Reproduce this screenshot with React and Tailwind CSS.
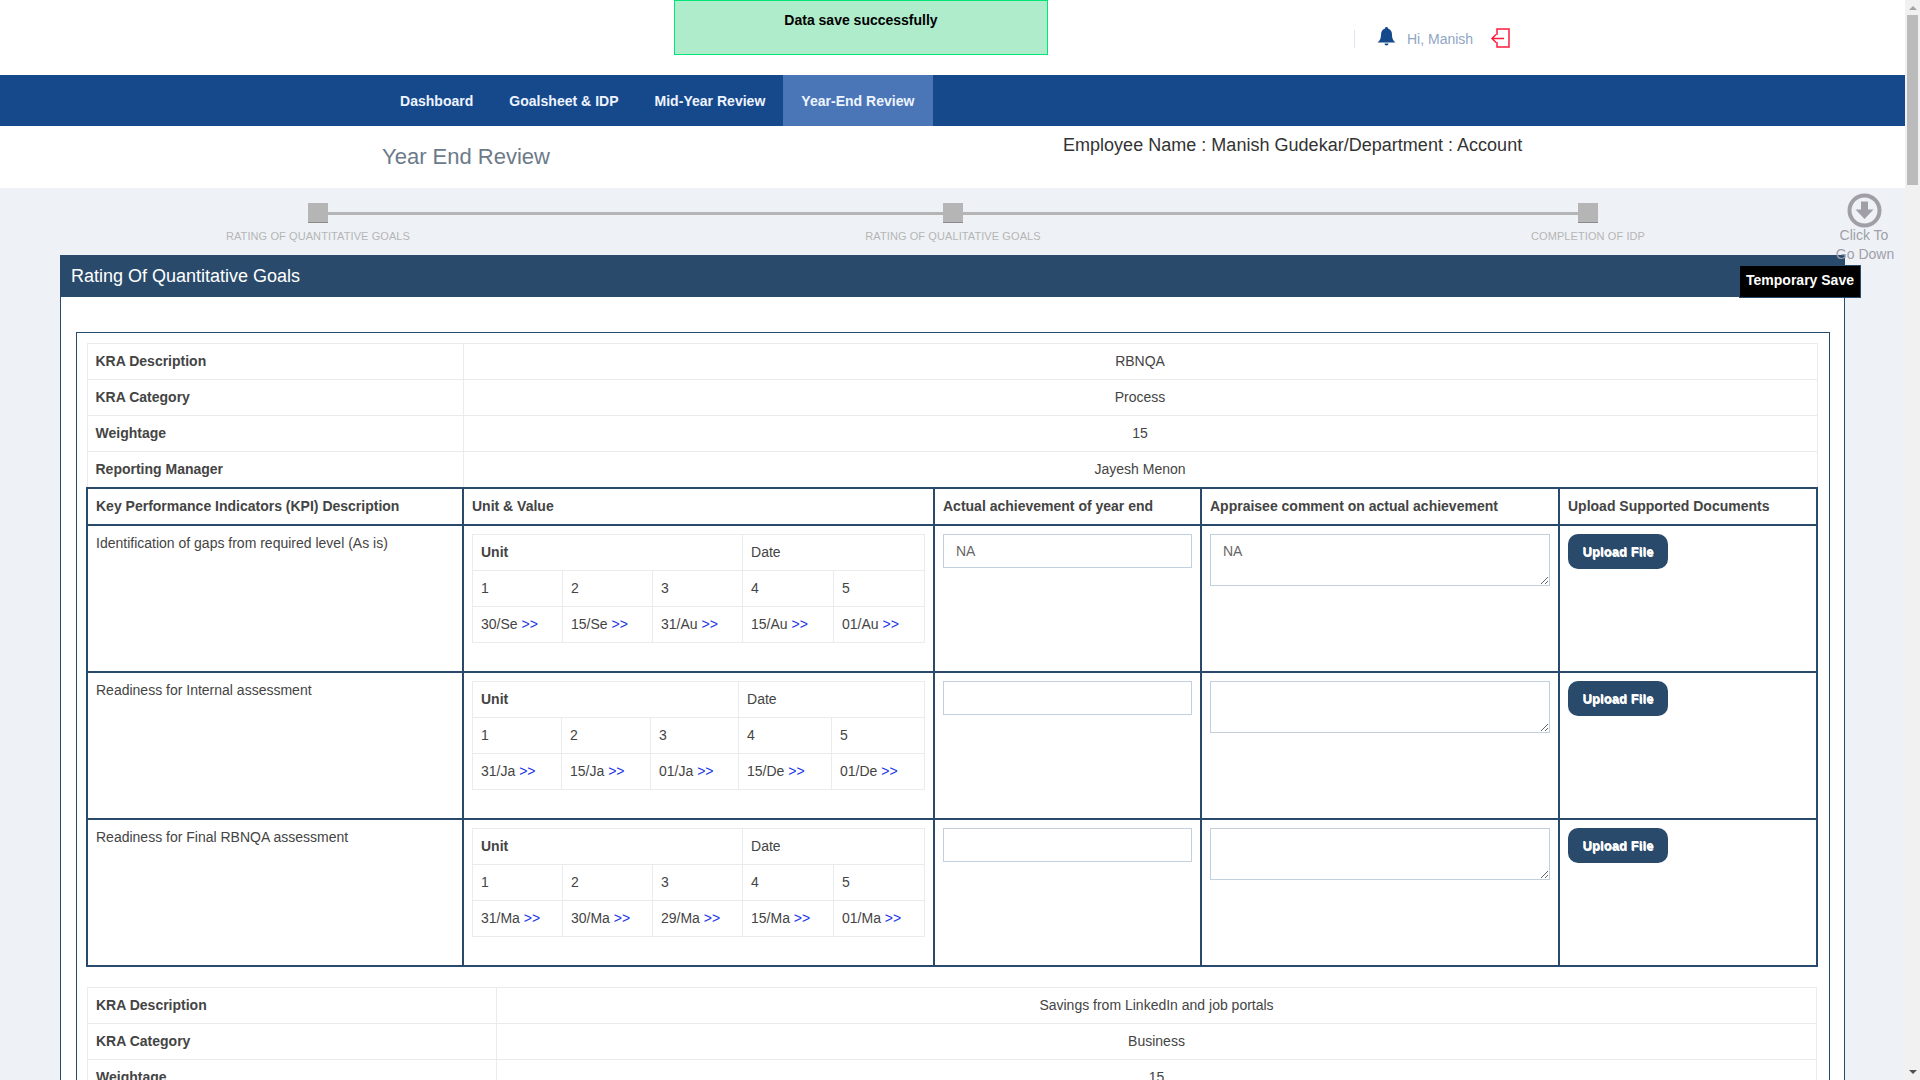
import React from "react";

const font = "font-['Liberation_Sans',Arial,sans-serif]";
const lightCell = "border border-[#e9ecef] h-9 px-2 pt-[7px] pb-0 align-top";
const darkCell = "border-2 border-[#2a4a6b] px-2 align-top";

function SubTable({ widths, dates }) {
  return (
    <table className="w-[452px] table-fixed border-collapse text-sm text-[#444]">
      <colgroup>
        {widths.map((w, i) => (
          <col key={i} className={w} />
        ))}
      </colgroup>
      <tbody>
        <tr>
          <td colSpan={3} className={lightCell + " font-bold"}>Unit</td>
          <td colSpan={2} className={lightCell}>Date</td>
        </tr>
        <tr>
          {[1, 2, 3, 4, 5].map((n) => (
            <td key={n} className={lightCell}>{n}</td>
          ))}
        </tr>
        <tr>
          {dates.map((d) => (
            <td key={d} className={lightCell}>
              {d} <span className="text-[#2036e8]">&gt;&gt;</span>
            </td>
          ))}
        </tr>
      </tbody>
    </table>
  );
}

function KpiRow({ title, sub, value }) {
  return (
    <tr className="h-[147px]">
      <td className={darkCell + " pt-[7px]"}>{title}</td>
      <td className={darkCell + " pt-2"}>{sub}</td>
      <td className={darkCell + " pt-2"}>
        <input
          readOnly
          value={value}
          className="block w-[249px] h-[34px] border border-[#c2cfdc] px-3 text-sm text-[#666] outline-none"
        />
      </td>
      <td className={darkCell + " pt-2"}>
        <textarea
          readOnly
          value={value}
          className="block w-[340px] h-[52px] border border-[#c2cfdc] px-3 py-[6px] text-sm text-[#666] outline-none"
        />
      </td>
      <td className={darkCell + " pt-2"}>
        <button className="block w-[100px] h-[35px] rounded-[10px] bg-[#2a4a6b] pt-[2px] text-[13px] font-bold tracking-[0.1px] text-white [text-shadow:0.5px_0.5px_0_#fff]">
          Upload File
        </button>
      </td>
    </tr>
  );
}

function InfoRows({ rows }) {
  return rows.map(([k, v]) => (
    <tr key={k}>
      <th className={lightCell + " text-left font-bold"}>{k}</th>
      <td colSpan={4} className={lightCell + " text-center"}>{v}</td>
    </tr>
  ));
}

const wideCols = ["w-[90px]", "w-[90px]", "w-[90px]", "w-[91px]", "w-[91px]"];
const narrowCols = ["w-[89px]", "w-[89px]", "w-[88px]", "w-[93px]", "w-[93px]"];

export default function App() {
  return (
    <div className={"flex h-screen w-full overflow-hidden " + font}>
      <div className="relative w-[1905px] h-full overflow-hidden bg-[#eef2f6]">
        <header className="flex h-[75px] items-start bg-white">
          <div className="ml-[674px] h-[55px] w-[374px] border border-[#00e676] bg-[#aeeccb] pt-[9px] text-center text-sm font-bold text-black">
            Data save successfully
          </div>
          <div className="ml-[306px] mt-[27px] flex h-[21px] items-center">
            <div className="mt-[3px] h-[18px] w-px bg-[#dde4ec]" />
            <svg className="ml-[22px] -mt-[2px]" width="19" height="19" viewBox="0 0 19 19" fill="#16498c">
              <path d="M9.5 0c1 0 1.5.7 1.5 1.6C14 2.4 15 5 15 8c0 3.5 1 5.5 3.5 7.5H.5C3 13.5 4 11.5 4 8c0-3 1-5.6 4-6.4C8 .7 8.5 0 9.5 0z" />
              <path d="M7.5 16.5h4a2 2 0 0 1-4 0z" />
            </svg>
            <span className="ml-[11px] mt-[3px] text-sm text-[#8fa6c4]">Hi, Manish</span>
            <svg className="ml-[17px] mt-[1px]" width="20" height="20" viewBox="0 0 20 20" fill="none" stroke="#ff1a3c" strokeWidth="1.5">
              <path d="M7 7V1h12v18H7v-5" />
              <path d="M14 10.5H2M6 6.5l-4 4 4 4" />
            </svg>
          </div>
        </header>

        <nav className="flex h-[51px] bg-[#16498c] pl-[382px] text-sm font-bold text-[#eef4ff]">
          <a className="flex items-center px-[18px] tracking-[0.02px]">Dashboard</a>
          <a className="flex items-center px-[18px] tracking-[0.02px]">Goalsheet &amp; IDP</a>
          <a className="flex items-center px-[18px] tracking-[0.02px]">Mid-Year Review</a>
          <a className="flex items-center bg-[#4a76b8] pl-[18px] pr-[19px] tracking-[0.02px]">Year-End Review</a>
        </nav>

        <div className="flex h-[62px] bg-white">
          <h1 className="ml-[382px] mt-[18px] text-[22px] leading-[26px] text-[#6c7a89]">Year End Review</h1>
          <div className="ml-[513px] mt-[8px] text-[18px] leading-[22px] tracking-[0.02px] text-[#333]">
            Employee Name : Manish Gudekar/Department : Account
          </div>
        </div>

        <div className="pt-[15px]">
          <div className="ml-[308px] flex w-[1290px] items-center">
            <div className="h-5 w-5 border-b border-[#8a8a8a] bg-[#b5b5b5]" />
            <div className="h-[3px] grow bg-[#b5b5b5]" />
            <div className="h-5 w-5 border-b border-[#8a8a8a] bg-[#b5b5b5]" />
            <div className="h-[3px] grow bg-[#b5b5b5]" />
            <div className="h-5 w-5 border-b border-[#8a8a8a] bg-[#b5b5b5]" />
          </div>
          <div className="ml-[168px] mt-[6px] flex h-[14px] w-[1570px] justify-between text-[11px] leading-[14px] tracking-[0.09px] text-[#b5b5b5]">
            <span className="w-[300px] text-center">RATING OF QUANTITATIVE GOALS</span>
            <span className="w-[300px] text-center">RATING OF QUALITATIVE GOALS</span>
            <span className="w-[300px] text-center">COMPLETION OF IDP</span>
          </div>
        </div>

        <section className="mx-[60px] mt-3 border-x border-[#2a4a6b] bg-white">
          <div className="flex h-[42px] items-center bg-[#2a4a6b] pl-[10px] text-[18px] text-white">
            Rating Of Quantitative Goals
          </div>
          <div className="ml-[15px] mr-[14px] mt-[35px] border border-[#2a4a6b] py-[10px] pl-[9px] pr-[10px] text-sm text-[#444]">
            <table className="w-[1730px] table-fixed border-collapse">
              <colgroup>
                <col className="w-[376px]" />
                <col className="w-[471px]" />
                <col className="w-[267px]" />
                <col className="w-[358px]" />
                <col className="w-[258px]" />
              </colgroup>
              <tbody>
                <InfoRows
                  rows={[
                    ["KRA Description", "RBNQA"],
                    ["KRA Category", "Process"],
                    ["Weightage", "15"],
                    ["Reporting Manager", "Jayesh Menon"],
                  ]}
                />
                <tr className="h-[37px] font-bold">
                  <td className={darkCell + " !align-middle"}>Key Performance Indicators (KPI) Description</td>
                  <td className={darkCell + " !align-middle"}>Unit &amp; Value</td>
                  <td className={darkCell + " !align-middle"}>Actual achievement of year end</td>
                  <td className={darkCell + " !align-middle"}>Appraisee comment on actual achievement</td>
                  <td className={darkCell + " !align-middle"}>Upload Supported Documents</td>
                </tr>
                <KpiRow
                  title="Identification of gaps from required level (As is)"
                  value="NA"
                  sub={<SubTable widths={wideCols} dates={["30/Se", "15/Se", "31/Au", "15/Au", "01/Au"]} />}
                />
                <KpiRow
                  title="Readiness for Internal assessment"
                  value=""
                  sub={<SubTable widths={narrowCols} dates={["31/Ja", "15/Ja", "01/Ja", "15/De", "01/De"]} />}
                />
                <KpiRow
                  title="Readiness for Final RBNQA assessment"
                  value=""
                  sub={<SubTable widths={wideCols} dates={["31/Ma", "30/Ma", "29/Ma", "15/Ma", "01/Ma"]} />}
                />
              </tbody>
            </table>

            <table className="ml-[1px] mt-[20px] w-[1730px] table-fixed border-collapse">
              <colgroup>
                <col className="w-[409px]" />
                <col />
                <col />
                <col />
                <col />
              </colgroup>
              <tbody>
                <InfoRows
                  rows={[
                    ["KRA Description", "Savings from LinkedIn and job portals"],
                    ["KRA Category", "Business"],
                    ["Weightage", "15"],
                  ]}
                />
              </tbody>
            </table>
          </div>
        </section>

        <div className="absolute left-[1831px] top-[193px] flex w-[66px] flex-col items-center text-sm leading-[19px] text-[#a09fa8]">
          <svg width="35" height="35" viewBox="0 0 35 35">
            <circle cx="17.5" cy="17.5" r="15" fill="none" stroke="#a09fa8" strokeWidth="4" />
            <path d="M14 8.5h7v8h5.5l-9 9.5-9-9.5H14z" fill="#a09fa8" />
          </svg>
          <span className="-mt-[2px]">Click To</span>
          <span className="ml-[2px]">Go Down</span>
        </div>

        <button className="absolute left-[1739px] top-[265px] h-[33px] w-[122px] border border-[#2a4a6b] bg-black pb-[3px] text-sm font-bold text-white">
          Temporary Save
        </button>
      </div>

      <div className="flex h-full w-[15px] flex-col items-center bg-[#f1f1f1]">
        <div className="mt-[6px] h-0 w-0 border-x-[4px] border-b-[4px] border-x-transparent border-b-[#a3a3a3]" />
        <div className="mt-[5px] h-[170px] w-[11px] bg-[#bbbbbb]" />
        <div className="mb-[6px] mt-auto h-0 w-0 border-x-[4px] border-t-[4px] border-x-transparent border-t-[#505050]" />
      </div>
    </div>
  );
}
